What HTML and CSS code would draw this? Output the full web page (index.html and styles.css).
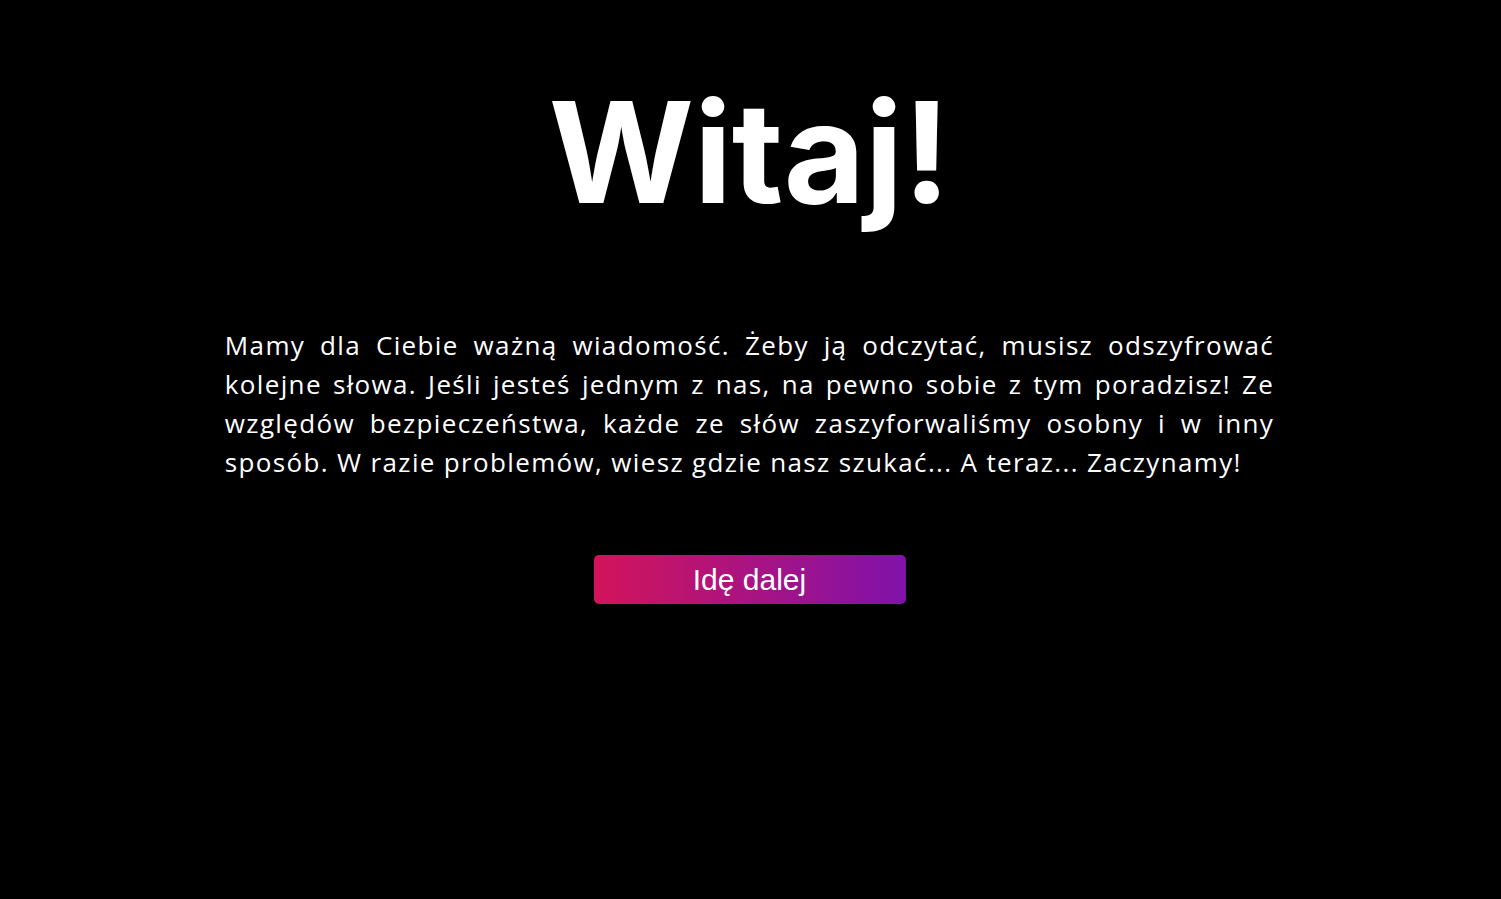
FILE: index.html
```html
<!DOCTYPE html>
<html lang="pl">
<head>
<meta charset="utf-8">
<title>Witaj!</title>
<link rel="stylesheet" href="styles.css">
</head>
<body>
<main class="page">
  <h1 class="title">Witaj!</h1>
  <p class="intro">Mamy dla Ciebie ważną wiadomość. Żeby ją odczytać, musisz odszyfrować kolejne słowa. Jeśli jesteś jednym z nas, na pewno sobie z tym poradzisz! Ze względów bezpieczeństwa, każde ze słów zaszyforwaliśmy osobny i w inny sposób. W razie problemów, wiesz gdzie nasz szukać... A teraz... Zaczynamy!</p>
  <button class="next" type="button">Idę dalej</button>
</main>
</body>
</html>
```
FILE: styles.css
```css
html, body {
  margin: 0;
  padding: 0;
  background: #000;
  color: #fff;
}
.page {
  display: flex;
  flex-direction: column;
  align-items: center;
  min-height: 899px;
  padding-right: 2px;
}
.title {
  margin: 82px 0 0;
  font-family: "Inter", sans-serif;
  font-weight: 700;
  font-size: 140px;
  line-height: 1;
  letter-spacing: 0;
}
.intro {
  width: 70%;
  margin: 104px 0 0;
  font-family: "Open Sans", sans-serif;
  font-size: 26px;
  line-height: 39px;
  letter-spacing: 1.35px;
  text-align: justify;
}
.next {
  margin-top: 73px;
  width: 312px;
  height: 49px;
  border: 0;
  border-radius: 5px;
  background: linear-gradient(to right, #d2145a, #8012aa);
  color: #fff;
  font-family: "Liberation Sans", Arial, sans-serif;
  font-size: 30px;
  padding: 0;
}
```
